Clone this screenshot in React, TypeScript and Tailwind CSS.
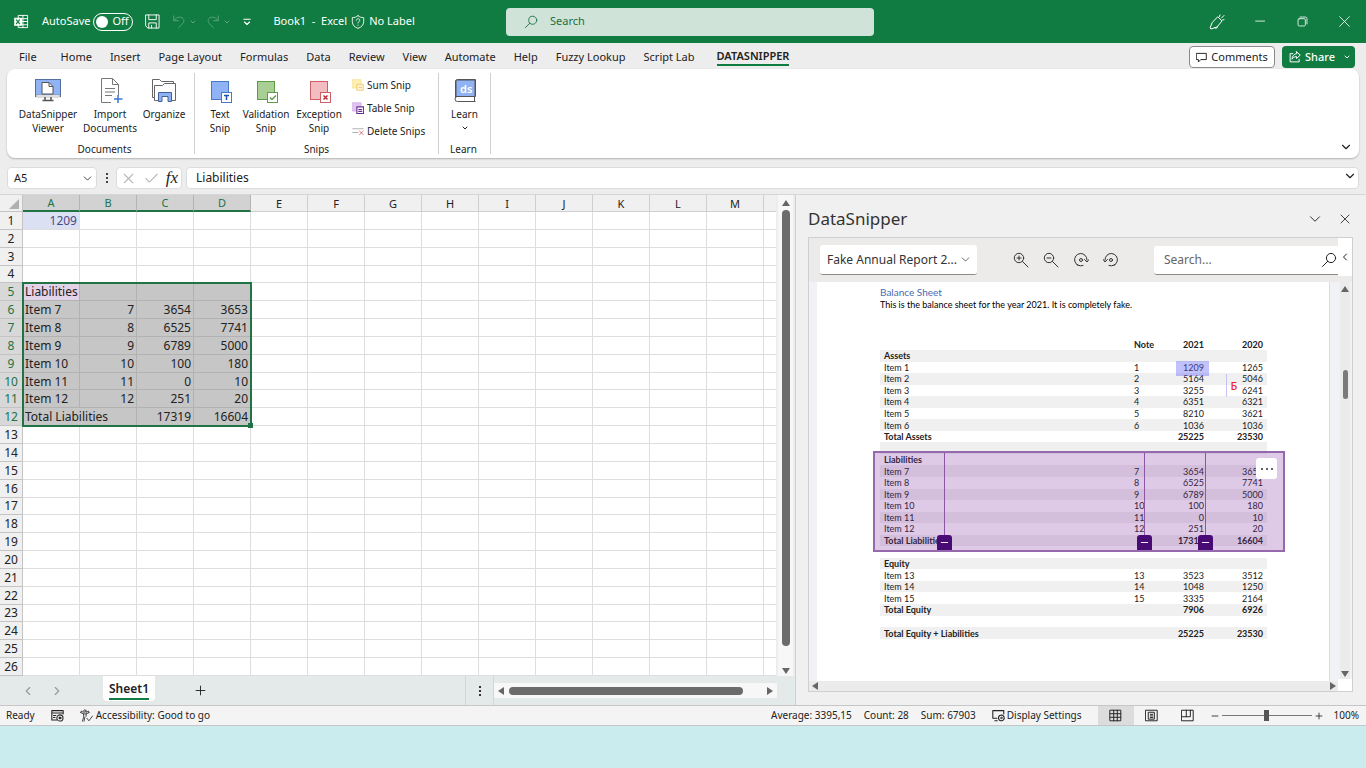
import type { ReactNode } from 'react'
import { clsx } from 'clsx'
import { Check, ChevronDown, ChevronLeft, ChevronRight, Minus, Plus, X } from 'lucide-react'

const MENU_TABS = [
  'Home', 'Insert', 'Page Layout', 'Formulas', 'Data', 'Review', 'View',
  'Automate', 'Help', 'Fuzzy Lookup', 'Script Lab',
]

const COLUMNS = ['A', 'B', 'C', 'D', 'E', 'F', 'G', 'H', 'I', 'J', 'K', 'L', 'M']

const CELLS: Record<number, string[]> = {
  1: ['1209'],
  5: ['Liabilities'],
  6: ['Item 7', '7', '3654', '3653'],
  7: ['Item 8', '8', '6525', '7741'],
  8: ['Item 9', '9', '6789', '5000'],
  9: ['Item 10', '10', '100', '180'],
  10: ['Item 11', '11', '0', '10'],
  11: ['Item 12', '12', '251', '20'],
  12: ['Total Liabilities', '', '17319', '16604'],
}

type ReportRow = { cells: string[]; bold?: boolean }

const REPORT: ReportRow[] = [
  { cells: ['Assets', '', '', ''], bold: true },
  { cells: ['Item 1', '1', '1209', '1265'] },
  { cells: ['Item 2', '2', '5164', '5046'] },
  { cells: ['Item 3', '3', '3255', '6241'] },
  { cells: ['Item 4', '4', '6351', '6321'] },
  { cells: ['Item 5', '5', '8210', '3621'] },
  { cells: ['Item 6', '6', '1036', '1036'] },
  { cells: ['Total Assets', '', '25225', '23530'], bold: true },
  { cells: ['', '', '', ''] },
  { cells: ['Liabilities', '', '', ''], bold: true },
  { cells: ['Item 7', '7', '3654', '3653'] },
  { cells: ['Item 8', '8', '6525', '7741'] },
  { cells: ['Item 9', '9', '6789', '5000'] },
  { cells: ['Item 10', '10', '100', '180'] },
  { cells: ['Item 11', '11', '0', '10'] },
  { cells: ['Item 12', '12', '251', '20'] },
  { cells: ['Total Liabilities', '', '17319', '16604'], bold: true },
  { cells: ['', '', '', ''] },
  { cells: ['Equity', '', '', ''], bold: true },
  { cells: ['Item 13', '13', '3523', '3512'] },
  { cells: ['Item 14', '14', '1048', '1250'] },
  { cells: ['Item 15', '15', '3335', '2164'] },
  { cells: ['Total Equity', '', '7906', '6926'], bold: true },
  { cells: ['', '', '', ''] },
  { cells: ['Total Equity + Liabilities', '', '25225', '23530'], bold: true },
]

function Svg({ size = 16, className, children }: { size?: number; className?: string; children: ReactNode }) {
  return (
    <svg
      width={size}
      height={size}
      viewBox="0 0 16 16"
      fill="none"
      stroke="currentColor"
      strokeLinecap="round"
      strokeLinejoin="round"
      className={clsx('shrink-0', className)}
      aria-hidden="true"
    >
      {children}
    </svg>
  )
}

function SearchIcon({ size = 16, className }: { size?: number; className?: string }) {
  return (
    <Svg size={size} className={className}>
      <circle cx="10" cy="6" r="4.6" />
      <path d="M6.7 9.3 1.5 14.5" />
    </Svg>
  )
}

function Triangle({ dir }: { dir: 'up' | 'down' | 'left' | 'right' }) {
  const points = {
    up: '1,8 5,2 9,8',
    down: '1,2 5,8 9,2',
    left: '8,1 2,5 8,9',
    right: '2,1 8,5 2,9',
  }[dir]
  return (
    <svg width="10" height="10" viewBox="0 0 10 10" className="shrink-0" aria-hidden="true">
      <polygon points={points} fill="#666" />
    </svg>
  )
}

function TitleBar() {
  return (
    <header className="grid h-[43px] shrink-0 grid-cols-[506fr_368fr_492fr] items-center bg-[#107c41] text-[11px] text-white">
      <div className="flex items-center whitespace-nowrap pl-[14px]">
        <Svg size={15}>
          <path d="M4.5 4V1.5h10v13h-10V12M9.5 1.5v13M4.5 5h10M9 8h5.5M4.5 11.5h10" />
          <rect x="0.5" y="4.5" width="7.5" height="7.5" fill="#fff" />
          <path d="m2.6 6.3 3.3 4M5.9 6.3l-3.3 4" stroke="#107c41" strokeWidth="1.3" />
        </Svg>
        <span className="ml-[13px]">AutoSave</span>
        <button
          type="button"
          role="switch"
          aria-checked="false"
          aria-label="AutoSave"
          className="ml-[3px] flex h-[18px] w-10 items-center gap-1 rounded-full border border-white pl-[2px]"
        >
          <span className="h-3 w-3 rounded-full bg-white" />
          <span>Off</span>
        </button>
        <button type="button" aria-label="Save" className="ml-3">
          <Svg size={15}>
            <path d="M1 1h14v14H3l-2-2zM4 1v5h8V1M4 15V9.500h8V15M7 12v3" />
          </Svg>
        </button>
        <button type="button" aria-label="Undo" className="ml-3 flex items-center gap-[3px] text-[#5ea77f]">
          <Svg size={14}>
            <path d="M2 1v5.500h5.500M2 6.500C4 4 6 2.500 8.500 2.500c5 0 6.500 4.500 3.500 7.500l-4.500 4.500" />
          </Svg>
          <ChevronDown size={8} strokeWidth={3} />
        </button>
        <button type="button" aria-label="Redo" className="ml-[9px] flex items-center gap-[3px] text-[#5ea77f]">
          <Svg size={14}>
            <path d="M14 1v5.500H8.500M14 6.500C12 4 10 2.500 7.500 2.500c-5 0-6.500 4.500-3.500 7.500l4.500 4.500" />
          </Svg>
          <ChevronDown size={8} strokeWidth={3} />
        </button>
        <button type="button" aria-label="Customize Quick Access Toolbar" className="ml-[11px]">
          <Svg size={10}>
            <path d="M3 3.500h10M4 8l4 4 4-4" strokeWidth="1.800" />
          </Svg>
        </button>
        <span className="ml-[21px] whitespace-pre">Book1  -  Excel</span>
        <button type="button" className="ml-1 flex items-center gap-1">
          <Svg size={14}>
            <path d="M8 .8C6 2.500 4 3 1.500 3v4.500c0 4 2.500 6.300 6.500 7.800 4-1.500 6.500-3.800 6.500-7.800V3C12 3 10 2.500 8 .8z" />
            <path d="M6 6c.2-2.500 4-2.300 4 0 0 1.500-2 1.600-2 3.200M8 11.500v.2" />
          </Svg>
          No Label
        </button>
      </div>
      <label className="flex h-7 items-center gap-3 rounded-[4px] bg-[#cfe3d8] pl-[18px] text-[#1d6f42]">
        <SearchIcon size={14} />
        <input aria-label="Search" placeholder="Search" className="w-full bg-transparent outline-none placeholder:text-[#1d6f42]" />
      </label>
      <div className="flex items-center justify-end gap-[29px] pr-[15px]">
        <button type="button" aria-label="Coming soon">
          <Svg>
            <path d="m9 3 4 4-5 6-6 2-1-1 2-5zM5.500 13.500c1 1.500 3 1 3-.8M10.500 2.500l.5-1.500M12.500 4 15 1.500M13.500 6l1.500-.3" />
          </Svg>
        </button>
        <button type="button" aria-label="Minimize">
          <Svg size={13}><path d="M2 7.500h11" /></Svg>
        </button>
        <button type="button" aria-label="Restore">
          <Svg size={13}>
            <rect x="2.500" y="4.500" width="9" height="9" rx="1.500" />
            <path d="M5 2.500h6.500a2 2 0 0 1 2 2V11" />
          </Svg>
        </button>
        <button type="button" aria-label="Close">
          <Svg size={13}><path d="m2 2 12 12M14 2 2 14" /></Svg>
        </button>
      </div>
    </header>
  )
}

function MenuBar() {
  return (
    <nav className="flex h-[26px] shrink-0 items-center whitespace-nowrap pt-[2px] pl-[19px] pr-[11px]">
      <button type="button" className="mr-6">File</button>
      <div className="flex flex-1 gap-[18px]">
        {MENU_TABS.map((tab) => (
          <button key={tab} type="button">{tab}</button>
        ))}
        <button type="button" className="ml-1 border-b-2 border-[#107c41] font-semibold">DATASNIPPER</button>
      </div>
      <button type="button" className="flex h-[22px] w-[86px] items-center justify-center gap-1 rounded-[4px] border border-[#8a8a8a] bg-white">
        <Svg size={11}><path d="M1 2h14v9H7l-3.500 3.500V11H1z" strokeWidth="1.400" /></Svg>
        Comments
      </button>
      <div className="ml-[7px] flex h-[22px] items-center rounded-[4px] bg-[#107c41] font-medium text-white">
        <button type="button" className="flex items-center gap-1 pl-[7px]">
          <Svg size={12}>
            <path d="M5 3.500H1.500v11h12V11M10 1l5 4.500-5 4.500V7.500C7 7.500 5 9 4 11c0-4 2.500-7 6-7.500z" strokeWidth="1.300" />
          </Svg>
          Share
        </button>
        <button type="button" aria-label="Share options" className="pl-2 pr-1">
          <ChevronDown size={8} strokeWidth={3} />
        </button>
      </div>
    </nav>
  )
}

function ViewerIcon() {
  return (
    <svg width="26" height="26" viewBox="0 0 26 26" fill="none" aria-hidden="true">
      <rect x="0.500" y="2.500" width="25" height="17" fill="#8fb3f5" stroke="#53709f" />
      <path d="M1 18h24v2H1z" fill="#fff" stroke="#777" strokeWidth=".5" />
      <path d="M7 17V5.500h7l4 4V17z" fill="#fff" stroke="#555" />
      <path d="M14 5.500v4h4" stroke="#555" />
      <path d="M10 20v3M16 20v3M7.500 23.500h11" stroke="#555" strokeWidth="1.500" />
    </svg>
  )
}

function ImportIcon() {
  return (
    <svg width="26" height="26" viewBox="0 0 26 26" fill="none" aria-hidden="true">
      <path d="M14 25.500H4.500v-24h11l6 6V18M15.500 1.500v6h6M8 11.500h10M8 15h10M8 18.500h7" stroke="#777" />
      <path d="M21 18v8M17 22h8.500" stroke="#3c78d8" strokeWidth="1.500" />
    </svg>
  )
}

function OrganizeIcon() {
  return (
    <svg width="26" height="26" viewBox="0 0 26 26" fill="none" stroke="#666" aria-hidden="true">
      <path d="M3 20.500H1.500v-18h7l2 2h12v3" />
      <path d="M7 23.500H3.500v-15h8l2-2h11v17H21" fill="#fff" />
      <path d="M7.500 24.500v-9h13v9h-3.500V19.500h-6v5z" fill="#8fb3f5" stroke="#44609a" />
    </svg>
  )
}

function SnipIcon({ fill, stroke, children }: { fill: string; stroke: string; children: ReactNode }) {
  return (
    <svg width="26" height="26" viewBox="0 0 26 26" fill="none" stroke={stroke} aria-hidden="true">
      <rect x="4.500" y="4.500" width="17" height="18" fill={fill} />
      <rect x="14.500" y="15.500" width="10" height="10" fill="#fff" />
      <g strokeWidth="1.500">{children}</g>
    </svg>
  )
}

function LearnIcon() {
  return (
    <svg width="26" height="26" viewBox="0 0 26 26" fill="none" stroke="#555" aria-hidden="true">
      <path d="M3.500 21V4a2 2 0 0 1 2-1.500h18v17H5.500a2 2 0 0 0 0 5h18M22.500 20v4" />
      <path d="M4 19.500V4a1.500 1.500 0 0 1 1.500-1H23v16.500z" fill="#8fb3f5" />
      <text x="8" y="16" fill="#fff" stroke="none" fontSize="11" fontWeight="600">ds</text>
    </svg>
  )
}

function RibbonButton({ icon, lines, className }: { icon: ReactNode; lines: string[]; className?: string }) {
  return (
    <button type="button" className={clsx('flex flex-col items-center whitespace-nowrap leading-[14px]', className)}>
      <span className="mb-1">{icon}</span>
      {lines.map((line) => (
        <span key={line}>{line}</span>
      ))}
    </button>
  )
}

function RibbonGroup({ label, className, children }: { label: string; className?: string; children: ReactNode }) {
  return (
    <section className={clsx('my-1 flex flex-col justify-between border-r border-[#d0d0d0] pt-1', className)}>
      <div className="flex">{children}</div>
      <p className="pr-[2px] text-center leading-[10px]">{label}</p>
    </section>
  )
}

function SmallSnip({ label, children }: { label: string; children: ReactNode }) {
  return (
    <button type="button" className="flex h-4 items-center gap-[3px] whitespace-nowrap">
      <Svg size={12}>{children}</Svg>
      {label}
    </button>
  )
}

function Ribbon() {
  return (
    <div className="mx-[7px] flex h-[89px] shrink-0 rounded-lg bg-white text-[10px] shadow-[0_1px_2px_rgba(0,0,0,0.25)]">
      <RibbonGroup label="Documents" className="w-[188px] pl-[10px]">
        <RibbonButton icon={<ViewerIcon />} lines={['DataSnipper', 'Viewer']} className="w-[62px]" />
        <RibbonButton icon={<ImportIcon />} lines={['Import', 'Documents']} className="w-[62px]" />
        <RibbonButton icon={<OrganizeIcon />} lines={['Organize']} className="w-[46px]" />
      </RibbonGroup>
      <RibbonGroup label="Snips" className="w-[244px] pl-[2px]">
        <RibbonButton
          icon={<SnipIcon fill="#8fb3f5" stroke="#4a78c8"><path d="M17 18.500h5M19.500 18.500v4.500" stroke="#1f4fae" /></SnipIcon>}
          lines={['Text', 'Snip']}
          className="w-[46px]"
        />
        <RibbonButton
          icon={<SnipIcon fill="#a9cf95" stroke="#5f9c49"><path d="m17 20.500 2 2 4-4" /></SnipIcon>}
          lines={['Validation', 'Snip']}
          className="w-[46px]"
        />
        <RibbonButton
          icon={<SnipIcon fill="#f2bcc0" stroke="#cf5f66"><path d="m17.500 18.500 4 4M21.500 18.500l-4 4" stroke="#c22a33" /></SnipIcon>}
          lines={['Exception', 'Snip']}
          className="w-[60px]"
        />
        <div className="ml-[3px] flex flex-col gap-[7px]">
          <SmallSnip label="Sum Snip">
            <rect x="1" y="1" width="11" height="11" fill="#fdf0b5" stroke="#f4dd83" />
            <rect x="7" y="7" width="8" height="8" fill="#fff6d5" stroke="#e9bf55" />
            <path d="M9.500 11h3" stroke="#e9a53a" />
          </SmallSnip>
          <SmallSnip label="Table Snip">
            <rect x="1" y="1" width="11" height="11" fill="#e2c2f0" stroke="#cfa4e3" />
            <rect x="6.500" y="6.500" width="9" height="9" fill="#fff" stroke="#6d2c91" strokeWidth="1.500" />
            <path d="M9 12.500h4M9 10h4" stroke="#6d2c91" strokeWidth="1.500" />
          </SmallSnip>
          <SmallSnip label="Delete Snips">
            <path d="M1 5h14M1 10h7" stroke="#999" />
            <path d="m10 8 5 5M15 8l-5 5" stroke="#d6494f" />
          </SmallSnip>
        </div>
      </RibbonGroup>
      <RibbonGroup label="Learn" className="w-[52px]">
        <button type="button" className="flex w-[52px] flex-col items-center leading-[14px]">
          <span className="mb-1"><LearnIcon /></span>
          Learn
          <ChevronDown size={8} strokeWidth={3} className="mt-[3px]" />
        </button>
      </RibbonGroup>
      <button type="button" aria-label="Collapse ribbon" className="mb-1 ml-auto mr-[6px] self-end">
        <ChevronDown size={14} strokeWidth={2} />
      </button>
    </div>
  )
}

function FormulaBar() {
  return (
    <div className="mt-[9px] flex h-[22px] shrink-0 items-center px-[7px] text-[12px]">
      <div className="flex h-full w-[90px] items-center rounded-[4px] border border-[#dcdcdc] bg-white pr-[2px]">
        <input aria-label="Name box" defaultValue="A5" className="w-full min-w-0 pl-[6px] text-[11px] outline-none" />
        <ChevronDown size={13} strokeWidth={1.5} className="shrink-0" />
      </div>
      <span className="flex w-[19px] flex-col items-center gap-[2px]">
        <i className="h-[2px] w-[2px] bg-[#444]" />
        <i className="h-[2px] w-[2px] bg-[#444]" />
        <i className="h-[2px] w-[2px] bg-[#444]" />
      </span>
      <div className="flex h-full w-[66px] items-center justify-between rounded-[4px] border border-[#dcdcdc] bg-white px-[3px]">
        <button type="button" aria-label="Cancel" className="text-[#b8b8b8]"><X size={17} strokeWidth={1.5} /></button>
        <button type="button" aria-label="Enter" className="text-[#b8b8b8]"><Check size={17} strokeWidth={1.5} /></button>
        <button type="button" aria-label="Insert function" className="font-['Liberation_Serif',serif] text-[17px] leading-4 italic">fx</button>
      </div>
      <div className="ml-1 flex h-full flex-1 items-center rounded-[4px] border border-[#dcdcdc] bg-white pr-[1px]">
        <input aria-label="Formula bar" defaultValue="Liabilities" className="w-full pl-[9px] outline-none" />
        <ChevronDown size={14} strokeWidth={2} className="mb-1 shrink-0" />
      </div>
    </div>
  )
}

function Grid() {
  return (
    <div className="relative min-h-0 flex-1 overflow-hidden bg-white">
      <table className="h-[499px] w-full table-fixed border-separate border-spacing-0 text-[12px] leading-[15px]">
        <colgroup>
          <col className="w-[23px]" />
          {COLUMNS.map((c) => (
            <col key={c} className="w-[57px]" />
          ))}
          <col />
        </colgroup>
        <thead>
          <tr className="h-[17px]">
            <th className="border-r border-b border-[#c4c4c4] bg-[#f0f0f0] p-0">
              <svg width="20" height="14" viewBox="0 0 20 14" aria-hidden="true">
                <polygon points="19,3 19,13 9,13" fill="#b0b0b0" />
              </svg>
            </th>
            {COLUMNS.map((c, i) => (
              <th
                key={c}
                scope="col"
                className={clsx(
                  'border-r p-0 text-[11px] font-normal',
                  i < 4
                    ? 'border-r-[#b4b4b4] border-b-2 border-b-[#217346] bg-[#d2d2d2] text-[#217346]'
                    : 'border-b border-[#cfcfcf] bg-[#f0f0f0]',
                )}
              >
                {c}
              </th>
            ))}
            <th className="border-b border-[#cfcfcf] bg-[#f0f0f0] p-0" />
          </tr>
        </thead>
        <tbody>
          {Array.from({ length: 27 }, (_, i) => i + 1).map((row) => {
            const selected = row >= 5 && row <= 12
            return (
              <tr key={row}>
                <th
                  scope="row"
                  className={clsx(
                    'border-r border-b border-[#c4c4c4] p-0 font-normal',
                    selected ? 'bg-[#d8d8d8] text-[#217346]' : 'bg-[#f0f0f0]',
                  )}
                >
                  {row < 27 ? row : <>&nbsp;</>}
                </th>
                {COLUMNS.map((c, i) => (
                  <td
                    key={c}
                    className={clsx(
                      'border-r border-b p-0 whitespace-nowrap',
                      i === 0 && row !== 1 ? 'pl-[2px]' : 'pr-[2px] text-right',
                      selected && i < 4
                        ? clsx('border-[#b2b2b2]', row === 5 && i === 0 ? 'bg-[#e3d3e8]' : 'bg-[#c6c6c6]')
                        : 'border-[#dedede]',
                      row === 12 && i === 0 && 'border-r-[#c6c6c6]',
                      row === 1 && i === 0 && 'bg-[#dbe1f3] text-[#4b4b86]',
                    )}
                  >
                    {CELLS[row]?.[i]}
                  </td>
                ))}
                <td className="border-b border-[#dedede] p-0" />
              </tr>
            )
          })}
        </tbody>
      </table>
      {/* selection outline over A5:D12 */}
      <div className="pointer-events-none absolute top-[87px] left-[22px] h-[145px] w-[230px] border-2 border-[#217346]">
        <span className="absolute -right-[3px] -bottom-[3px] h-[5px] w-[5px] bg-[#217346]" />
      </div>
    </div>
  )
}

function Worksheet() {
  return (
    <div className="flex min-w-0 flex-1 flex-col border-r border-[#cfcfcf]">
      <div className="flex min-h-0 flex-1">
        <Grid />
        <div className="mr-[2px] ml-[2px] flex w-[15px] flex-col items-center gap-[2px] bg-[#f7f7f7] pt-[3px]">
          <Triangle dir="up" />
          <span className="w-2 flex-1 rounded-full bg-[#6b6b6b]" />
          <span className="h-4" />
          <Triangle dir="down" />
        </div>
      </div>
      <div className="flex h-[29px] shrink-0 items-center bg-[#e4e9ea]">
        <button type="button" aria-label="Previous sheet" className="ml-[21px] text-[#9a9a9a]"><ChevronLeft size={14} /></button>
        <button type="button" aria-label="Next sheet" className="ml-[15px] text-[#9a9a9a]"><ChevronRight size={14} /></button>
        <button type="button" className="ml-[39px] flex h-[25px] w-[52px] justify-center self-start rounded-b-[4px] bg-white pt-[5px] text-[12px] leading-[16px] font-semibold">
          <span className="h-[19px] border-b-2 border-[#107c41]">Sheet1</span>
        </button>
        <button type="button" aria-label="New sheet" className="ml-[38px]"><Plus size={15} strokeWidth={1.5} /></button>
        <span className="ml-auto flex h-full w-[29px] flex-col items-center justify-center gap-[2px] border-x border-[#d3d6d6]">
          <i className="h-[2px] w-[2px] bg-[#333]" />
          <i className="h-[2px] w-[2px] bg-[#333]" />
          <i className="h-[2px] w-[2px] bg-[#333]" />
        </span>
        <div className="mr-[18px] flex h-[15px] w-[283px] items-center gap-[3px] bg-[#f7f7f8] px-[2px]">
          <Triangle dir="left" />
          <span className="h-2 w-[234px] rounded-full bg-[#6b6b6b]" />
          <span className="flex-1" />
          <Triangle dir="right" />
        </div>
      </div>
    </div>
  )
}

function ReportTable() {
  return (
    <div className="relative mt-7 text-[9px] leading-[11px]">
      <table className="h-[300px] w-full table-fixed border-collapse">
        <colgroup>
          <col />
          <col className="w-[37px]" />
          <col className="w-[33px]" />
          <col className="w-[63px]" />
        </colgroup>
        <thead>
          <tr>
            <th className="p-0" />
            <th scope="col" className="p-0 text-left">Note</th>
            <th scope="col" className="p-0 text-right">2021</th>
            <th scope="col" className="p-0 pr-1 text-right">2020</th>
          </tr>
        </thead>
        <tbody>
          {REPORT.map((row, i) => (
            <tr key={i} className={clsx('odd:bg-[#f0f0f0]', row.bold && 'font-bold')}>
              <td className="p-0 pl-1 whitespace-nowrap">{row.cells[0] || <>&nbsp;</>}</td>
              <td className="p-0">{row.cells[1]}</td>
              <td className="p-0 text-right">{row.cells[2]}</td>
              <td className="p-0 pr-1 text-right">{row.cells[3]}</td>
            </tr>
          ))}
        </tbody>
      </table>

      {/* text snip */}
      <div className="absolute top-[22px] right-[58px] h-[15px] w-[33px] bg-[#6464f5]/40" />
      <div className="absolute top-[35px] right-[26px] flex h-[23px] w-[15px] items-center justify-center border-l border-[#c3c3f5] text-[11px] font-medium text-[#e8262b] font-['Noto_Sans',sans-serif]">
        Б
      </div>

      {/* table snip */}
      <div className="absolute top-[112px] -right-[18px] -left-[7px] h-[101px] border-2 border-[#9668ad] bg-[#7b2d9b]/25">
        {['left-[69px]', 'right-[138px]', 'right-[77px]'].map((pos) => (
          <div key={pos} className={clsx('absolute top-0 bottom-0 flex w-px items-end justify-center bg-[#8a56a5]', pos)}>
            <button type="button" aria-label="Remove column divider" className="flex h-[15px] w-[15px] shrink-0 items-center justify-center rounded-t-[3px] bg-[#480a74] text-white">
              <Minus size={11} strokeWidth={2} />
            </button>
          </div>
        ))}
        <button type="button" aria-label="More options" className="absolute top-[5px] right-[6px] flex h-[21px] w-[21px] items-center justify-center gap-[3px] rounded-[3px] bg-white">
          <i className="h-[2px] w-[2px] rounded-full bg-[#333]" />
          <i className="h-[2px] w-[2px] rounded-full bg-[#333]" />
          <i className="h-[2px] w-[2px] rounded-full bg-[#333]" />
        </button>
      </div>
    </div>
  )
}

function ViewerPane() {
  return (
    <aside className="flex w-[570px] shrink-0 flex-col bg-[#f0f0f0] pr-[13px] pb-[13px] pl-3">
      <div className="flex h-[42px] shrink-0 items-center pt-[6px]">
        <h2 className="text-[17px] leading-6 text-[#333]">DataSnipper</h2>
        <button type="button" aria-label="Pane options" className="ml-auto"><ChevronDown size={18} strokeWidth={1.25} /></button>
        <button type="button" aria-label="Close pane" className="ml-[13px]"><X size={16} strokeWidth={1.25} /></button>
      </div>
      <div className="flex min-h-0 flex-1 flex-col border border-[#cfcfcf] bg-[#edebe9]">
        <div className="flex h-[44px] shrink-0 items-center pl-[11px]">
          <div className="relative">
            <select aria-label="Document" className="h-[30px] w-[157px] appearance-none rounded-[3px] border-b border-[#8a8a8a] bg-white pl-[7px] text-[12px] text-[#333]">
              <option>Fake Annual Report 2...</option>
            </select>
            <ChevronDown size={13} strokeWidth={1.25} className="pointer-events-none absolute top-2 right-[5px]" />
          </div>
          <div className="ml-9 flex gap-[14px] text-[#333]">
            <button type="button" aria-label="Zoom in">
              <Svg><circle cx="6" cy="6" r="4.700" /><path d="M9.500 9.500 15 15M4 6h4M6 4v4" /></Svg>
            </button>
            <button type="button" aria-label="Zoom out">
              <Svg><circle cx="6" cy="6" r="4.700" /><path d="M9.500 9.500 15 15M4 6h4" /></Svg>
            </button>
            <button type="button" aria-label="Rotate clockwise">
              <Svg><path d="M10 13.500A6.200 6.200 0 1 1 14 8M11.500 7.500 14 10l2-2.500M5 13.200l-1-.5" /><circle cx="8" cy="8" r="1.500" /></Svg>
            </button>
            <button type="button" aria-label="Rotate counterclockwise">
              <Svg><path d="M6 13.500A6.200 6.200 0 1 0 2 8M.3 7.500 2 10l2.500-2.500M11 13.200l1-.5" /><circle cx="8" cy="8" r="1.500" /></Svg>
            </button>
          </div>
          <label className="ml-auto flex h-[29px] w-[184px] items-center rounded-l-[3px] border-b border-[#8a8a8a] bg-white pr-[1px] pl-[10px] text-[12px]">
            <input aria-label="Search document" placeholder="Search..." className="w-full min-w-0 outline-none placeholder:text-[#666]" />
            <SearchIcon />
          </label>
          <button type="button" aria-label="Expand panel" className="flex h-[38px] w-[14px] items-center justify-center self-start bg-white">
            <ChevronLeft size={12} />
          </button>
        </div>
        <div className="flex min-h-0 flex-1 bg-[#f1f2f5]">
          <div className="flex min-w-0 flex-1 flex-col">
            <div className="mr-2 ml-2 min-h-0 flex-1 overflow-hidden border-r border-[#dcdcdc] bg-white pr-[62px] pl-[63px] font-['Lato',sans-serif]">
              <h3 className="mt-[3px] text-[10px] leading-[14px] text-[#4a6ab0]">Balance Sheet</h3>
              <p className="text-[9px] leading-[12px] text-black">This is the balance sheet for the year 2021. It is completely fake.</p>
              <ReportTable />
            </div>
            <div className="flex h-[10px] shrink-0 items-center justify-between bg-[#ebebeb] pl-[1px]">
              <Triangle dir="left" />
              <Triangle dir="right" />
            </div>
          </div>
          <div className="flex w-[14px] flex-col items-center">
            <div className="flex w-[10px] flex-1 flex-col items-center bg-[#ebebeb] pt-[2px]">
              <Triangle dir="up" />
              <span className="mt-[76px] h-[29px] w-[5px] rounded-full bg-[#7a7a7a]" />
              <span className="flex-1" />
              <Triangle dir="down" />
            </div>
            <span className="h-[12px] w-full bg-white" />
          </div>
        </div>
      </div>
    </aside>
  )
}

function StatusBar() {
  return (
    <footer className="flex h-[21px] shrink-0 items-center border-y border-[#c6c6c6] bg-[#f4f4f4] pr-[7px] pl-[6px] text-[10px] whitespace-nowrap">
      <span>Ready</span>
      <button type="button" aria-label="Record macro" className="ml-4">
        <Svg size={13}>
          <path d="M7 13.500H1V2h14v4M1 5h14M3 8h3M3 10.500h2" strokeWidth="1.300" />
          <circle cx="11" cy="11" r="3.800" strokeWidth="1.300" />
          <circle cx="11" cy="11" r="1.300" fill="currentColor" />
        </Svg>
      </button>
      <button type="button" className="ml-4 flex items-center gap-[3px]">
        <Svg size={13}>
          <circle cx="6" cy="2.500" r="1.500" />
          <path d="M1 4.500 4.500 6v4L3 15M11 4.500 7.500 6v3M4.500 6h3M1 4.500l.5-2 2.500 1.500M11 4.500l-.5-2L8 4M6 10l-1 5M8.500 11.500l2.500 3 4.500-6" />
        </Svg>
        Accessibility: Good to go
      </button>
      <span className="ml-auto">Average: 3395,15</span>
      <span className="ml-3">Count: 28</span>
      <span className="ml-3">Sum: 67903</span>
      <button type="button" className="ml-4 flex items-center gap-[2px]">
        <Svg size={13}>
          <path d="M6 11.500H1V2h13.500v4M3.500 14.500h3" strokeWidth="1.300" />
          <circle cx="11.500" cy="11" r="3.500" strokeDasharray="2 1" strokeWidth="1.500" />
          <circle cx="11.500" cy="11" r="1" />
        </Svg>
        Display Settings
      </button>
      <div className="ml-4 flex h-full">
        <button type="button" aria-label="Normal view" className="flex w-9 items-center justify-center bg-[#dcdcdc]">
          <Svg size={13}><path d="M1.500 1.500h13v13h-13zM5.800 1.500v13M10.200 1.500v13M1.500 5.800h13M1.500 10.200h13" strokeWidth="1.200" /></Svg>
        </button>
        <button type="button" aria-label="Page layout view" className="flex w-9 items-center justify-center">
          <Svg size={13}><path d="M1 1.500h14v13H1zM4.500 4h7v8.500h-7zM6.500 6.500h3M6.500 8.500h3M6.500 10.500h3" strokeWidth="1.200" /></Svg>
        </button>
        <button type="button" aria-label="Page break view" className="flex w-9 items-center justify-center">
          <Svg size={13}><path d="M1 1.500h14v13H1zM1 9.500h10.500v-8M6.500 1.500v8" strokeWidth="1.200" /></Svg>
        </button>
      </div>
      <button type="button" aria-label="Zoom out" className="ml-1"><Minus size={10} /></button>
      <input
        type="range"
        aria-label="Zoom"
        min={0}
        max={100}
        defaultValue={50}
        className="mx-[2px] h-[11px] w-[90px] appearance-none bg-transparent [&::-webkit-slider-runnable-track]:h-px [&::-webkit-slider-runnable-track]:bg-[#777] [&::-webkit-slider-thumb]:-mt-[5px] [&::-webkit-slider-thumb]:h-[11px] [&::-webkit-slider-thumb]:w-[5px] [&::-webkit-slider-thumb]:appearance-none [&::-webkit-slider-thumb]:bg-[#555]"
      />
      <button type="button" aria-label="Zoom in"><Plus size={10} /></button>
      <span className="ml-[10px]">100%</span>
    </footer>
  )
}

export default function App() {
  return (
    <div className="flex h-screen flex-col overflow-hidden bg-[#cbecee] text-[11px] text-[#222] font-['Noto_Sans',sans-serif]">
      <TitleBar />
      <div className="flex min-h-0 flex-1 flex-col bg-[#eeedee]">
        <MenuBar />
        <Ribbon />
        <FormulaBar />
        <main className="mt-[5px] flex min-h-0 flex-1 border-t border-[#d6d6d6]">
          <Worksheet />
          <ViewerPane />
        </main>
        <StatusBar />
      </div>
      <div className="h-[42px] shrink-0" />
    </div>
  )
}
